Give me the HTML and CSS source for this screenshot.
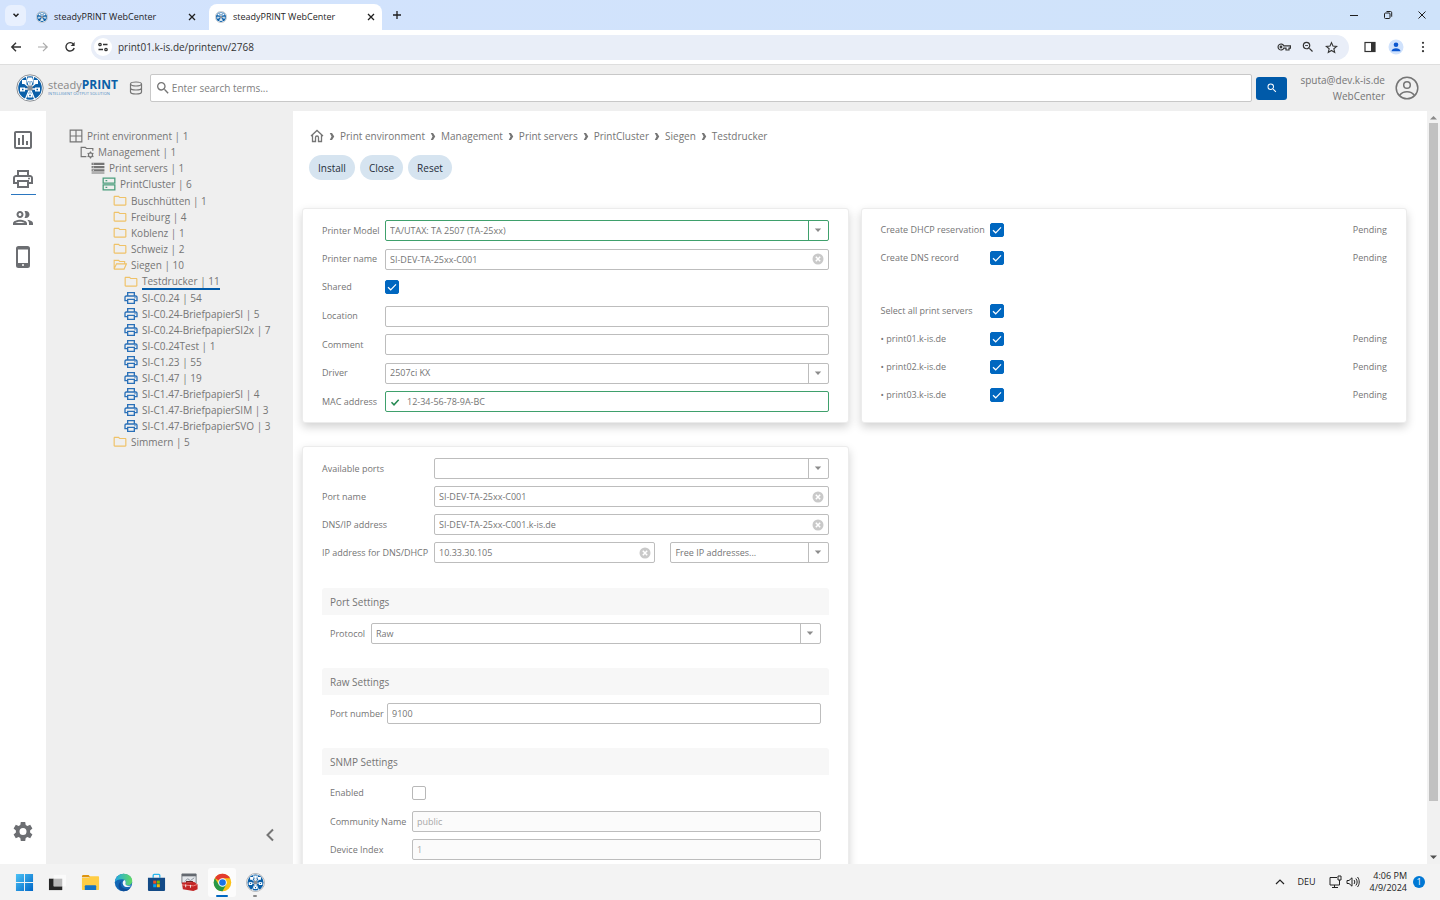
FILE: index.html
```html
<!DOCTYPE html>
<html lang="en">
<head>
  <meta charset="UTF-8">
  <meta name="viewport" content="width=device-width, initial-scale=1.0">
  <title>steadyPRINT WebCenter</title>
  <link rel="stylesheet" href="styles.css">
</head>
<body>
  <!-- Shared icons -->
  <svg class="sprite" aria-hidden="true">
    <symbol id="logo" viewBox="0 0 28 28">
      <circle cx="14" cy="14" r="13.200" fill="#fff" stroke="#8b8f94" stroke-width="1"/>
      <circle cx="14" cy="14" r="11.800" fill="#0a5fa8"/>
      <path d="M14 14L10 2M14 14L18 2M14 14L9 26M14 14L19 26" stroke="#fff" stroke-width="1.200"/>
      <path d="M14 5v17M6 15h16" stroke="#fff" stroke-width="1.300"/>
      <path d="M8 9l6 5 6-5" stroke="#fff" stroke-width="1.200" fill="none"/>
      <path d="M6 6h4.500v4H6zM17.500 6H22v4h-4.500zM4 13.500h5v4H4zM19 13.500h5v4h-5zM11.500 19.500h5v4h-5zM12 3.500h4v3.500h-4z" fill="#fff"/>
      <path d="M6 14.800h1.500v1.500H6zM20.500 14.800H22v1.500h-1.500zM13.200 20.800h1.600v1.500h-1.600z" fill="#0a5fa8"/>
      <path d="M11.500 11.500h5v5h-5z" fill="#8b9097"/>
    </symbol>
    <symbol id="close" viewBox="0 0 10 10"><path d="M2 2l6 6M8 2l-6 6" stroke="currentColor" stroke-width="1.300" fill="none"/></symbol>
    <symbol id="search" viewBox="0 0 24 24"><path fill="currentColor" d="M15.500 14h-.79l-.28-.27A6.470 6.470 0 0 0 16 9.500 6.500 6.500 0 1 0 9.500 16c1.610 0 3.090-.59 4.230-1.570l.27.28v.79l5 4.990L20.490 19l-4.990-5zm-6 0C7.010 14 5 11.990 5 9.500S7.010 5 9.500 5 14 7.010 14 9.500 11.990 14 9.500 14z"/></symbol>
    <symbol id="printer" viewBox="0 0 24 24"><path fill="currentColor" d="M19 8h-1V3H6v5H5c-1.660 0-3 1.340-3 3v6h4v4h12v-4h4v-6c0-1.660-1.340-3-3-3zM8 5h8v3H8V5zm8 12v2H8v-4h8v2zm2-2v-2H6v2H4v-4c0-.55.45-1 1-1h14c.55 0 1 .45 1 1v4h-2z"/><circle cx="18" cy="11.500" r="1" fill="currentColor"/></symbol>
    <symbol id="folder" viewBox="0 0 24 24"><path fill="currentColor" d="M9.170 5l2 2H21v11H3V5h6.170M10 3H3c-1.100 0-2 .9-2 2v13c0 1.100.9 2 2 2h18c1.100 0 2-.9 2-2V7c0-1.100-.9-2-2-2h-9l-2-2z"/></symbol>
    <symbol id="folder-open" viewBox="0 0 24 24"><path d="M2 18.500V4h7.500l2 2H20v4M2 18.500L6 10h17l-4 9H2.500z" fill="none" stroke="currentColor" stroke-width="1.900"/></symbol>
    <symbol id="caret" viewBox="0 0 10 6"><path d="M1 .5h8l-4 4.500z" fill="currentColor"/></symbol>
    <symbol id="clear" viewBox="0 0 12 12"><circle cx="6" cy="6" r="5.500" fill="#c9c9c9"/><path d="M3.800 3.800l4.400 4.400M8.200 3.800L3.800 8.200" stroke="#fff" stroke-width="1.500"/></symbol>
    <symbol id="sep" viewBox="0 0 6 10"><path d="M.5 1h2.500L5.500 5 3 9H.5L2.500 5z" fill="currentColor"/></symbol>
  </svg>

  <!-- Browser -->
  <div class="tab-strip">
    <button class="tab-search" aria-label="Search tabs"><svg width="10" height="10" viewBox="0 0 10 10"><path d="M2.500 3.800L5 6.300l2.500-2.500" stroke="currentColor" stroke-width="1.500" fill="none"/></svg></button>
    <div class="tab">
      <svg class="favicon"><use href="#logo"/></svg>
      <span class="tab-title">steadyPRINT WebCenter</span>
      <button class="plain" aria-label="Close tab"><svg width="10" height="10"><use href="#close"/></svg></button>
    </div>
    <div class="tab active">
      <svg class="favicon"><use href="#logo"/></svg>
      <span class="tab-title">steadyPRINT WebCenter</span>
      <button class="plain" aria-label="Close tab"><svg width="10" height="10"><use href="#close"/></svg></button>
    </div>
    <button class="plain new-tab" aria-label="New tab"><svg width="10" height="10" viewBox="0 0 10 10"><path d="M5 1v8M1 5h8" stroke="currentColor" stroke-width="1.300"/></svg></button>
    <div class="window-buttons">
      <button class="plain" aria-label="Minimize"><svg width="10" height="10" viewBox="0 0 10 10"><path d="M1 5.500h8" stroke="currentColor"/></svg></button>
      <button class="plain" aria-label="Restore"><svg width="10" height="10" viewBox="0 0 10 10"><rect x="1.500" y="3" width="5.500" height="5.500" rx="1" fill="none" stroke="currentColor"/><path d="M3.500 1.500h4a1.200 1.200 0 0 1 1.200 1.200v4" fill="none" stroke="currentColor"/></svg></button>
      <button class="plain" aria-label="Close"><svg width="10" height="10" viewBox="0 0 10 10"><path d="M1.500 1.500l7 7M8.500 1.500l-7 7" stroke="currentColor"/></svg></button>
    </div>
  </div>

  <div class="toolbar">
    <button class="plain" aria-label="Back"><svg width="12" height="12" viewBox="0 0 12 12"><path d="M11 6H2M6 1.800L1.800 6 6 10.200" stroke="currentColor" stroke-width="1.400" fill="none"/></svg></button>
    <button class="plain muted" aria-label="Forward"><svg width="12" height="12" viewBox="0 0 12 12"><path d="M1 6h9M6 1.800L10.200 6 6 10.200" stroke="currentColor" stroke-width="1.200" fill="none"/></svg></button>
    <button class="plain" aria-label="Reload"><svg width="12" height="12" viewBox="0 0 12 12"><path d="M9.500 3.300A4.200 4.200 0 1 0 10.200 7" stroke="currentColor" stroke-width="1.400" fill="none"/><path d="M10.600 1v4H6.600z" fill="currentColor"/></svg></button>
    <div class="omnibox">
      <span class="site-info"><svg width="10" height="10" viewBox="0 0 10 10" fill="none" stroke="currentColor" stroke-width="1.300"><circle cx="2" cy="2.500" r="1.200"/><path d="M5 2.500h4.500M.5 7.500H5"/><circle cx="8" cy="7.500" r="1.200"/></svg></span>
      <input type="text" class="url" aria-label="Address" value="print01.k-is.de/printenv/2768">
      <button class="plain" aria-label="Passwords"><svg width="14" height="12" viewBox="0 0 14 12" fill="none" stroke="currentColor" stroke-width="1.200"><path d="M6.800 4.800A3 3 0 1 0 6.800 7.200H9V9h3V7.200h1.400V4.800z"/><circle cx="4" cy="6" r=".8"/></svg></button>
      <button class="plain" aria-label="Zoom"><svg width="14" height="14" viewBox="0 0 24 24"><use href="#search"/><path d="M7 9.500h5" stroke="currentColor" stroke-width="1.500"/></svg></button>
      <button class="plain" aria-label="Bookmark"><svg width="13" height="13" viewBox="0 0 24 24"><path d="M12 3l2.700 6.300 6.800.6-5.200 4.400 1.600 6.700-5.900-3.600L6.100 21l1.600-6.700L2.500 9.900l6.800-.6z" fill="none" stroke="currentColor" stroke-width="2"/></svg></button>
    </div>
    <div class="toolbar-right">
      <button class="plain" aria-label="Side panel"><svg width="12" height="12" viewBox="0 0 12 12"><rect x="1" y="1.500" width="10" height="9" fill="none" stroke="currentColor" stroke-width="1.200"/><path d="M7 1.500h4v9H7z" fill="currentColor"/></svg></button>
      <button class="plain" aria-label="Profile"><svg width="16" height="16" viewBox="0 0 16 16"><circle cx="8" cy="8" r="7.500" fill="#d0e2fc"/><circle cx="8" cy="5.800" r="2.300" fill="#0b57d0"/><path d="M3.500 12.200c0-2 2.500-3 4.500-3s4.500 1 4.500 3z" fill="#0b57d0"/></svg></button>
      <button class="plain" aria-label="Menu"><svg width="4" height="12" viewBox="0 0 4 12" fill="currentColor"><circle cx="2" cy="1.800" r="1.100"/><circle cx="2" cy="6" r="1.100"/><circle cx="2" cy="10.200" r="1.100"/></svg></button>
    </div>
  </div>

  <!-- App header -->
  <header class="app-header">
    <a href="#" class="brand">
      <svg width="28" height="28"><use href="#logo"/></svg>
      <span class="brand-text">
        <span class="brand-name">steady<b>PRINT</b></span>
        <span class="brand-claim">INTELLIGENT OUTPUT SOLUTION</span>
      </span>
    </a>
    <svg class="db" width="14" height="14" viewBox="0 0 14 14" fill="none" stroke="currentColor" stroke-width="1.200"><ellipse cx="7" cy="3" rx="5.500" ry="2"/><path d="M1.500 3v8c0 1.100 2.500 2 5.500 2s5.500-.9 5.500-2V3M1.500 7c0 1.100 2.500 2 5.500 2s5.500-.9 5.500-2"/></svg>
    <form class="search">
      <label class="search-box">
        <svg width="16" height="16"><use href="#search"/></svg>
        <input type="search" placeholder="Enter search terms..." aria-label="Search">
      </label>
      <button type="button" class="search-button" aria-label="Search"><svg width="12" height="12"><use href="#search"/></svg></button>
    </form>
    <div class="user">
      <span>sputa@dev.k-is.de</span>
      <span>WebCenter</span>
    </div>
    <svg class="avatar" width="24" height="24" viewBox="0 0 24 24" fill="none" stroke="currentColor" stroke-width="1.500"><circle cx="12" cy="12" r="10.800"/><circle cx="12" cy="9" r="3.300"/><path d="M4.500 19.500c1.800-2.500 4.500-3.700 7.500-3.700s5.700 1.200 7.500 3.700"/></svg>
  </header>

  <div class="app">
    <nav class="rail" aria-label="Main">
      <a href="#" aria-label="Dashboard"><svg width="24" height="24" viewBox="0 0 24 24"><path fill="currentColor" d="M19 3H5c-1.100 0-2 .9-2 2v14c0 1.100.9 2 2 2h14c1.100 0 2-.9 2-2V5c0-1.100-.9-2-2-2zm0 16H5V5h14v14zM7 10h2v7H7zm4-3h2v10h-2zm4 6h2v4h-2z"/></svg></a>
      <a href="#" class="active" aria-label="Printers"><svg width="24" height="24"><use href="#printer"/></svg></a>
      <a href="#" aria-label="Users"><svg width="24" height="24" viewBox="0 0 24 24"><path fill="currentColor" d="M9 13.750c-2.340 0-7 1.170-7 3.500V19h14v-1.750c0-2.330-4.660-3.500-7-3.500zM4.340 17c.84-.58 2.870-1.250 4.660-1.250s3.820.67 4.660 1.250H4.340zM9 12c1.930 0 3.500-1.570 3.500-3.500S10.930 5 9 5 5.500 6.570 5.500 8.500 7.070 12 9 12zm0-5c.83 0 1.500.67 1.500 1.500S9.830 10 9 10s-1.500-.67-1.500-1.500S8.170 7 9 7zm7.040 6.810c1.160.84 1.960 1.960 1.960 3.440V19h4v-1.750c0-2.020-3.500-3.170-5.960-3.440zM15 12c1.930 0 3.500-1.570 3.500-3.500S16.930 5 15 5c-.54 0-1.040.13-1.500.35.63.89 1 1.980 1 3.150s-.37 2.260-1 3.150c.46.22.96.35 1.500.35z"/></svg></a>
      <a href="#" aria-label="Mobile"><svg width="24" height="24" viewBox="0 0 24 24"><rect x="6" y="2" width="12" height="20" rx="1.500" fill="none" stroke="currentColor" stroke-width="2"/><path fill="currentColor" d="M6 2h12v2.500H6zM6 18h12v4H6z"/><circle cx="12" cy="20" r="1" fill="#fff"/></svg></a>
      <a href="#" class="settings" aria-label="Settings"><svg width="24" height="24" viewBox="0 0 24 24"><path fill="currentColor" fill-rule="evenodd" d="M9.800 2h4.400l.5 2.900 1.700 1 2.800-1.100 2.200 3.800-2.300 1.800v2.200l2.300 1.800-2.200 3.800-2.800-1.100-1.700 1-.5 2.900H9.800l-.5-2.900-1.700-1-2.800 1.100-2.200-3.800 2.300-1.800v-2.200L2.600 8.600l2.200-3.800 2.800 1.100 1.700-1zM12 8a3.500 3.500 0 1 0 0 7 3.500 3.500 0 0 0 0-7z"/></svg></a>
    </nav>

    <aside class="sidebar">
      <ul class="tree">
        <li><a href="#"><svg viewBox="0 0 24 24" fill="none" stroke="currentColor" stroke-width="2"><path d="M2 2h20v20H2zM12 2v20M2 12h20"/></svg>Print environment | 1</a>
          <ul>
            <li><a href="#"><svg viewBox="0 0 24 24" fill="none" stroke="currentColor" stroke-width="2"><path d="M11 20H2V4h7l2 2h11v4"/><circle cx="18" cy="17" r="3.500"/><path d="M18 11v3M18 20v3M13 14l2.500 1.500M20.500 18.500L23 20M13 20l2.500-1.500M20.500 15.500L23 14"/></svg>Management | 1</a>
              <ul>
                <li><a href="#"><svg viewBox="0 0 24 24"><path d="M1 3h22v4H1zM1 8.500h22v4H1zM1 14h22v4H1zM1 19.500h22v2H1z" fill="currentColor"/><path d="M3 5h2M3 10.500h2M3 16h2" stroke="#efefef" stroke-width="1.500"/></svg>Print servers | 1</a>
                  <ul>
                    <li><a href="#"><svg class="green" viewBox="0 0 24 24" fill="none" stroke="currentColor" stroke-width="2.200"><path d="M2 2h20v8.500H2zM2 13.500h20V22H2zM6 6.200h3M6 17.800h3"/></svg>PrintCluster | 6</a>
                      <ul>
                        <li><a href="#"><svg class="yellow"><use href="#folder"/></svg>Buschhütten | 1</a></li>
                        <li><a href="#"><svg class="yellow"><use href="#folder"/></svg>Freiburg | 4</a></li>
                        <li><a href="#"><svg class="yellow"><use href="#folder"/></svg>Koblenz | 1</a></li>
                        <li><a href="#"><svg class="yellow"><use href="#folder"/></svg>Schweiz | 2</a></li>
                        <li><a href="#"><svg class="yellow"><use href="#folder-open"/></svg>Siegen | 10</a>
                          <ul>
                            <li><a href="#"><svg class="yellow"><use href="#folder"/></svg><span class="selected">Testdrucker | 11</span></a></li>
                            <li><a href="#"><svg class="blue"><use href="#printer"/></svg>SI-C0.24 | 54</a></li>
                            <li><a href="#"><svg class="blue"><use href="#printer"/></svg>SI-C0.24-BriefpapierSI | 5</a></li>
                            <li><a href="#"><svg class="blue"><use href="#printer"/></svg>SI-C0.24-BriefpapierSI2x | 7</a></li>
                            <li><a href="#"><svg class="blue"><use href="#printer"/></svg>SI-C0.24Test | 1</a></li>
                            <li><a href="#"><svg class="blue"><use href="#printer"/></svg>SI-C1.23 | 55</a></li>
                            <li><a href="#"><svg class="blue"><use href="#printer"/></svg>SI-C1.47 | 19</a></li>
                            <li><a href="#"><svg class="blue"><use href="#printer"/></svg>SI-C1.47-BriefpapierSI | 4</a></li>
                            <li><a href="#"><svg class="blue"><use href="#printer"/></svg>SI-C1.47-BriefpapierSIM | 3</a></li>
                            <li><a href="#"><svg class="blue"><use href="#printer"/></svg>SI-C1.47-BriefpapierSVO | 3</a></li>
                          </ul>
                        </li>
                        <li><a href="#"><svg class="yellow"><use href="#folder"/></svg>Simmern | 5</a></li>
                      </ul>
                    </li>
                  </ul>
                </li>
              </ul>
            </li>
          </ul>
        </li>
      </ul>
      <button class="plain collapse" aria-label="Collapse"><svg width="10" height="14" viewBox="0 0 10 14"><path d="M8 1.500L2.500 7 8 12.500" fill="none" stroke="currentColor" stroke-width="2"/></svg></button>
    </aside>

    <main class="content">
      <nav class="breadcrumb" aria-label="Breadcrumb">
        <a href="#" aria-label="Home"><svg width="14" height="14" viewBox="0 0 14 14" fill="none" stroke="currentColor" stroke-width="1.300"><path d="M1 7l6-5.500L13 7M2.500 6v6.500H5.500V8.500a1.500 1.500 0 0 1 3 0v4h3V6"/></svg></a>
        <svg class="sep"><use href="#sep"/></svg>
        <a href="#">Print environment</a>
        <svg class="sep"><use href="#sep"/></svg>
        <a href="#">Management</a>
        <svg class="sep"><use href="#sep"/></svg>
        <a href="#">Print servers</a>
        <svg class="sep"><use href="#sep"/></svg>
        <a href="#">PrintCluster</a>
        <svg class="sep"><use href="#sep"/></svg>
        <a href="#">Siegen</a>
        <svg class="sep"><use href="#sep"/></svg>
        <a href="#">Testdrucker</a>
      </nav>
      <div class="actions">
        <button>Install</button>
        <button>Close</button>
        <button>Reset</button>
      </div>

      <div class="cards">
        <section class="card printer-card">
          <div class="row">
            <label for="model">Printer Model</label>
            <div class="field valid"><select id="model"><option>TA/UTAX: TA 2507 (TA-25xx)</option></select><span class="arrow"><svg><use href="#caret"/></svg></span></div>
          </div>
          <div class="row">
            <label for="name">Printer name</label>
            <div class="field"><input type="text" id="name" value="SI-DEV-TA-25xx-C001"><button class="plain clear" aria-label="Clear"><svg><use href="#clear"/></svg></button></div>
          </div>
          <div class="row">
            <label for="shared">Shared</label>
            <input type="checkbox" id="shared" checked>
          </div>
          <div class="row">
            <label for="location">Location</label>
            <div class="field"><input type="text" id="location"></div>
          </div>
          <div class="row">
            <label for="comment">Comment</label>
            <div class="field"><input type="text" id="comment"></div>
          </div>
          <div class="row">
            <label for="driver">Driver</label>
            <div class="field"><select id="driver"><option>2507ci KX</option></select><span class="arrow"><svg><use href="#caret"/></svg></span></div>
          </div>
          <div class="row">
            <label for="mac">MAC address</label>
            <div class="field valid"><svg class="tick" viewBox="0 0 10 10"><path d="M1.500 5.300L4 7.800l4.700-5" fill="none" stroke="currentColor" stroke-width="1.500"/></svg><input type="text" id="mac" value="12-34-56-78-9A-BC"></div>
          </div>
        </section>

        <section class="card status-card">
          <div class="row"><label for="dhcp">Create DHCP reservation</label><input type="checkbox" id="dhcp" checked><span class="status">Pending</span></div>
          <div class="row"><label for="dns">Create DNS record</label><input type="checkbox" id="dns" checked><span class="status">Pending</span></div>
          <div class="row servers"><label for="all">Select all print servers</label><input type="checkbox" id="all" checked></div>
          <div class="row"><label for="p1">• print01.k-is.de</label><input type="checkbox" id="p1" checked><span class="status">Pending</span></div>
          <div class="row"><label for="p2">• print02.k-is.de</label><input type="checkbox" id="p2" checked><span class="status">Pending</span></div>
          <div class="row"><label for="p3">• print03.k-is.de</label><input type="checkbox" id="p3" checked><span class="status">Pending</span></div>
        </section>

        <section class="card port-card">
          <div class="row">
            <label for="ports">Available ports</label>
            <div class="field"><select id="ports"><option></option></select><span class="arrow"><svg><use href="#caret"/></svg></span></div>
          </div>
          <div class="row">
            <label for="port-name">Port name</label>
            <div class="field"><input type="text" id="port-name" value="SI-DEV-TA-25xx-C001"><button class="plain clear" aria-label="Clear"><svg><use href="#clear"/></svg></button></div>
          </div>
          <div class="row">
            <label for="address">DNS/IP address</label>
            <div class="field"><input type="text" id="address" value="SI-DEV-TA-25xx-C001.k-is.de"><button class="plain clear" aria-label="Clear"><svg><use href="#clear"/></svg></button></div>
          </div>
          <div class="row">
            <label for="ip">IP address for DNS/DHCP</label>
            <div class="split">
              <div class="field"><input type="text" id="ip" value="10.33.30.105"><button class="plain clear" aria-label="Clear"><svg><use href="#clear"/></svg></button></div>
              <div class="field"><select aria-label="Free IP addresses"><option>Free IP addresses...</option></select><span class="arrow"><svg><use href="#caret"/></svg></span></div>
            </div>
          </div>

          <fieldset class="group">
            <legend>Port Settings</legend>
            <div class="row protocol">
              <label for="protocol">Protocol</label>
              <div class="field"><select id="protocol"><option>Raw</option></select><span class="arrow"><svg><use href="#caret"/></svg></span></div>
            </div>
          </fieldset>
          <fieldset class="group">
            <legend>Raw Settings</legend>
            <div class="row port-number">
              <label for="port-number">Port number</label>
              <div class="field"><input type="text" id="port-number" value="9100"></div>
            </div>
          </fieldset>
          <fieldset class="group snmp">
            <legend>SNMP Settings</legend>
            <div class="row">
              <label for="enabled">Enabled</label>
              <input type="checkbox" id="enabled">
            </div>
            <div class="row">
              <label for="community">Community Name</label>
              <div class="field disabled"><input type="text" id="community" value="public" disabled></div>
            </div>
            <div class="row">
              <label for="index">Device Index</label>
              <div class="field disabled"><input type="text" id="index" value="1" disabled></div>
            </div>
          </fieldset>
        </section>
      </div>
    </main>

    <div class="scrollbar" aria-hidden="true">
      <svg width="7" height="5"><path d="M0 4.500L3.500 1 7 4.500z" fill="#8a8a8a"/></svg>
      <div class="thumb"></div>
      <svg width="7" height="5"><path d="M0 .5L3.500 4 7 .5z" fill="#505050"/></svg>
    </div>
  </div>

  <!-- Taskbar -->
  <footer class="taskbar">
    <div class="apps">
      <button class="plain" aria-label="Start"><svg viewBox="0 0 20 20"><defs><linearGradient id="win" x1="0" y1="0" x2="1" y2="1"><stop offset="0" stop-color="#4cc2f5"/><stop offset="1" stop-color="#0067c8"/></linearGradient></defs><path fill="url(#win)" d="M1 1h8.500v8.500H1zM10.500 1H19v8.500h-8.500zM1 10.500h8.500V19H1zM10.500 10.500H19V19h-8.500z"/></svg></button>
      <button class="plain" aria-label="Task view"><svg viewBox="0 0 20 20"><path d="M1 6h14v12H1z" fill="#262626"/><path d="M6 2h13v12H6z" fill="#fafafa"/><path d="M6 6h9v8H6z" fill="#b9b9b9"/></svg></button>
      <button class="plain" aria-label="File Explorer"><svg viewBox="0 0 20 20"><path d="M1 3.500c0-.8.500-1.500 1.500-1.500H8l2 2.500H1z" fill="#dd9410"/><path d="M1 5l7 0 1.500-1.500H18c.6 0 1 .5 1 1V17c0 .6-.4 1-1 1H2c-.6 0-1-.4-1-1z" fill="#ffcd44"/><path d="M4 18v-4c0-.8.5-1.200 1.200-1.200h9.600c.7 0 1.200.4 1.200 1.200v4z" fill="#1573c4"/></svg></button>
      <button class="plain" aria-label="Edge"><svg viewBox="0 0 20 20"><defs><linearGradient id="edge" x1="0" y1="0" x2="1" y2="0"><stop offset="0" stop-color="#24a8e4"/><stop offset="1" stop-color="#62da62"/></linearGradient></defs><circle cx="10" cy="10" r="9.200" fill="#1267b5"/><path d="M1 9.500C1.500 4.500 5.300.8 10.300.8c5 0 8.900 3.400 8.900 7.500 0 3-2.200 4.700-4.700 4.700-1.800 0-2.800-.7-2.500-1.500.9-1.700.3-4.800-3.200-5C5 6.400 2 7.500 1 9.500z" fill="url(#edge)"/><path d="M8 8.500c-2.200 2.300-.8 7.300 3.500 8.200 2.200.4 4.500-.2 6-1.500C15.500 18 13 19.200 10 19.200c-6-.5-7-8-2-10.700z" fill="#0c4c98"/><path d="M12 11.500c.7-1.500.2-3.200-.8-4.200-2 .8-2.700 3.200-1.500 5.200 1.600 2.700 5.500 3 8.700 1-1.500 0-6 .5-6.400-2z" fill="#f1f6fa"/></svg></button>
      <button class="plain" aria-label="Store"><svg viewBox="0 0 20 20"><path d="M6.500 5V2.500c0-.6.300-1 1-1h5c.7 0 1 .4 1 1V5" fill="none" stroke="#2bb8ee" stroke-width="1.400"/><path d="M1 5h18v12.500c0 1-.5 1.500-1.500 1.500h-15C1.500 19 1 18.500 1 17.500z" fill="#134a86"/><path d="M6.500 8h3.200v3.200H6.500z" fill="#f25022"/><path d="M10.300 8h3.200v3.200h-3.200z" fill="#7fba00"/><path d="M6.500 11.800h3.200V15H6.500z" fill="#00a4ef"/><path d="M10.300 11.800h3.200V15h-3.200z" fill="#ffb900"/></svg></button>
      <button class="plain" aria-label="Toolbox"><svg viewBox="0 0 20 20"><path d="M2 1h15v10H2z" fill="#e3e6ea" stroke="#777c83"/><path d="M2 1h15v2.500H2z" fill="#646970"/><path d="M5 9l3-3 3 2 4-3" stroke="#8b949e" fill="none"/><path d="M7 11V9h6l1 2" stroke="#73201f" fill="none" stroke-width="1.200"/><path d="M2 10l13-.5 3.500 2.500v5L14 19 3 17z" fill="#c32525"/><path d="M2 12.500l12 1 4.500-1.500" stroke="#f08b84" fill="none"/><path d="M6 12v3M11 12.500v3" stroke="#eee"/></svg></button>
      <button class="plain current" aria-label="Chrome"><svg viewBox="0 0 20 20"><circle cx="10" cy="10" r="9.200" fill="#fbc116"/><path d="M10 10L2 5.400A9.200 9.200 0 0 1 18 5.500H10z" fill="#e33b2e"/><path d="M2 5.400A9.200 9.200 0 0 0 10 19.200l4-7L10 10 6 12z" fill="#279847"/><circle cx="10" cy="10" r="4.500" fill="#fff"/><circle cx="10" cy="10" r="3.500" fill="#1a73e8"/></svg></button>
      <button class="plain running" aria-label="steadyPRINT"><svg><use href="#logo"/></svg></button>
    </div>
    <div class="tray">
      <button class="plain" aria-label="Hidden icons"><svg width="10" height="10" viewBox="0 0 10 10"><path d="M1 7l4-4 4 4" fill="none" stroke="currentColor" stroke-width="1.200"/></svg></button>
      <span class="lang">DEU</span>
      <svg width="14" height="14" viewBox="0 0 14 14" fill="none" stroke="currentColor"><path d="M9 2.500H2v7.500h9.500V7M4 12.500h6M6.500 10v2.500M10 1h3v4h-3zM11.500 5v2"/></svg>
      <svg width="14" height="14" viewBox="0 0 14 14" fill="none" stroke="currentColor"><path d="M1 5.500h2l3-2.700v8.400L3 8.500H1zM8 5c1 1.200 1 2.800 0 4M9.800 3.500c1.800 2 1.800 5 0 7M11.500 2c2.300 2.800 2.300 7.200 0 10"/></svg>
      <div class="clock"><span>4:06 PM</span><span>4/9/2024</span></div>
      <span class="badge">1</span>
    </div>
  </footer>
</body>
</html>
```
FILE: styles.css
```css
* { margin: 0; padding: 0; box-sizing: border-box; }

body {
  display: flex;
  flex-direction: column;
  height: 100vh;
  overflow: hidden;
  font-family: "Open Sans", "Noto Sans", sans-serif;
  font-size: 10px;
  line-height: 16px;
  color: #757575;
  background: #fff;
}
svg { display: block; flex: none; }
a { color: inherit; text-decoration: none; }
button, input, select { font: inherit; color: inherit; }
.sprite { position: absolute; width: 0; height: 0; }
.plain { display: grid; place-items: center; border: 0; background: none; cursor: pointer; }

/* Browser tabs */
.tab-strip {
  display: flex;
  align-items: center;
  height: 30px;
  padding-left: 5px;
  color: #1f1f1f;
  background: linear-gradient(90deg, #d3e3fd, #cfe3fa);
}
.tab-search {
  display: grid;
  place-items: center;
  width: 21px;
  height: 21px;
  border: 0;
  border-radius: 6px;
  background: #e8f0fe;
}
.tab {
  display: flex;
  align-items: center;
  align-self: flex-end;
  gap: 6px;
  width: 173px;
  height: 26px;
  padding: 0 6px;
  font-size: 9px;
  margin-left: 4px;
}
.tab + .tab { margin-left: 6px; }
.tab.active { border-radius: 8px 8px 0 0; background: #fff; }
.tab-title { flex: 1; white-space: nowrap; }
.favicon { width: 12px; height: 12px; }
.new-tab { margin-left: 10px; }
.window-buttons { display: flex; gap: 24px; margin-left: auto; padding-right: 13px; }

/* Browser toolbar */
.toolbar {
  display: flex;
  align-items: center;
  gap: 15px;
  height: 35px;
  padding: 0 15px 0 10px;
  color: #333;
  background: #fff;
  border-bottom: 1px solid #dedede;
}
.muted { color: #aaa; }
.omnibox {
  display: flex;
  flex: 1;
  align-items: center;
  gap: 10px;
  height: 25px;
  padding: 0 11px 0 3px;
  border-radius: 13px;
  background: #e9eef8;
}
.site-info { display: grid; place-items: center; width: 18px; height: 18px; border-radius: 50%; background: #fff; }
.url { flex: 1; min-width: 0; margin-left: -4px; border: 0; background: none; outline: 0; }
.toolbar-right { display: flex; align-items: center; gap: 12px; }
.toolbar-right button:last-child { margin-left: 5px; }

/* App header */
.app-header {
  display: flex;
  align-items: center;
  height: 46px;
  padding: 0 21px 0 16px;
  background: #efefef;
}
.brand { display: flex; align-items: center; gap: 4px; }
.brand-text { display: flex; flex-direction: column; }
.brand-name { font-size: 11px; line-height: 12px; color: #888; }
.brand-name b { font-size: 12px; color: #0a5fa8; }
.brand-claim { font-size: 4px; line-height: 6px; color: #4f8ec4; }
.db { margin: 0 7px 0 11px; }
.search { display: flex; flex: 1; align-items: center; gap: 4px; }
.search-box {
  display: flex;
  flex: 1;
  align-items: center;
  gap: 1px;
  height: 28px;
  padding: 0 4px;
  border: 1px solid #c8c8c8;
  border-radius: 2px;
  background: #fff;
}
.search-box input { flex: 1; border: 0; outline: 0; background: none; }
.search-box input::placeholder { color: #808080; }
.search-button {
  display: grid;
  place-items: center;
  width: 31px;
  height: 23px;
  border: 0;
  border-radius: 3px;
  color: #fff;
  background: #005aa9;
}
.user { display: flex; flex-direction: column; margin: 0 10px 0 13px; text-align: right; }

/* App frame */
.app { display: flex; flex: 1; min-height: 0; }
.rail {
  display: flex;
  flex-direction: column;
  align-items: center;
  gap: 7px;
  width: 46px;
  padding: 13px 0 16px;
  color: #6c6e72;
}
.rail a { display: grid; place-items: center; width: 25px; height: 32px; border-bottom: 1px solid transparent; }
.rail .active { border-color: #2a76c0; }
.rail .settings { margin-top: auto; }

.sidebar {
  display: flex;
  flex-direction: column;
  justify-content: space-between;
  width: 247px;
  padding: 17px 18px 22px 23px;
  background: #efefef;
}
.tree, .tree ul { list-style: none; }
.tree ul { padding-left: 11px; }
.tree ul ul ul ul { padding-top: 1px; }
.tree a { display: flex; align-items: center; gap: 4px; height: 16px; white-space: nowrap; }
.tree svg { width: 14px; height: 14px; }
.tree .blue { width: 16px; height: 16px; margin: 0 -1px; }
.selected { line-height: 14px; border-bottom: 2px solid #005aa9; }
.yellow { color: #efc268; }
.green { color: #4a9d7c; }
.blue { color: #2a70b8; }
.collapse { align-self: flex-end; }

/* Content */
.content { flex: 1; min-width: 0; overflow: hidden; padding: 17px 20px 0 9px; }
.breadcrumb { display: flex; align-items: center; gap: 5px; padding-left: 8px; }
.sep { width: 6px; height: 9px; }
.actions { display: flex; gap: 5px; margin: 11px 0 28px; padding-left: 7px; }
.actions button {
  height: 25px;
  padding: 0 9px;
  border: 0;
  border-radius: 13px;
  color: #1f2d3a;
  background: #d6e4f0;
}
.cards { display: grid; grid-template-columns: 1fr 1fr; gap: 23px 12px; }
.card {
  display: flex;
  flex-direction: column;
  gap: 8px;
  padding: 11px 19px;
  border: 1px solid #ececec;
  border-radius: 3px;
  background: #fff;
  box-shadow: 0 4px 10px rgba(0, 0, 0, 0.18);
  font-size: 9px;
}
.printer-card { min-height: 215px; justify-content: space-between; gap: 0; }
.port-card { padding-bottom: 48px; }

/* Form rows */
.row { display: grid; grid-template-columns: 63px 1fr; align-items: center; height: 20px; }
.row label { white-space: nowrap; }
.status-card .row { grid-template-columns: 108px 1fr auto; }
.status-card .servers { margin-top: 25px; }
.port-card .row { grid-template-columns: 112px 1fr; }
.split { display: grid; grid-template-columns: 7fr 5fr; gap: 15px; }
.field {
  display: flex;
  align-items: center;
  height: 21px;
  min-width: 0;
  border: 1px solid #bdbdbd;
  border-radius: 2px;
  background: #fff;
}
.field input, .field select {
  flex: 1;
  min-width: 0;
  height: 19px;
  padding: 0 4px;
  border: 0;
  outline: 0;
  background: none;
  appearance: none;
}
.arrow { display: grid; place-items: center; width: 20px; height: 19px; border-left: 1px solid #bdbdbd; color: #8c8c8c; }
.arrow svg { width: 8px; height: 5px; }
.clear { width: 19px; }
.clear svg { width: 12px; height: 12px; }
.valid { border-color: #3fa06c; }
.valid .arrow { border-color: #3fa06c; }
.tick { width: 10px; height: 10px; margin: 0 3px 0 4px; color: #258a52; }
.disabled { background: #fbfbfb; color: #a8a8a8; }
input[type="checkbox"] {
  width: 14px;
  height: 14px;
  border: 1px solid #b8b8b8;
  border-radius: 2px;
  appearance: none;
  background: #fff;
}
.status-card input[type="checkbox"] { margin-left: 1px; }
input[type="checkbox"]:checked {
  border-color: #0067c0;
  background: #0067c0 url("data:image/svg+xml,%3Csvg xmlns='http://www.w3.org/2000/svg' viewBox='0 0 12 12'%3E%3Cpath d='M2 6.200l2.700 2.600L10 3.300' fill='none' stroke='white' stroke-width='1.200'/%3E%3C/svg%3E") center / 12px no-repeat;
}

/* Grouped settings */
.group { border: 0; margin-top: 18px; padding: 0 8px; }
.group + .group { margin-top: 17px; }
.group legend {
  width: calc(100% + 16px);
  height: 27px;
  margin: 0 -8px 8px;
  padding: 0 8px;
  border-radius: 3px 3px 0 0;
  font-size: 10px;
  line-height: 28px;
  background: #f7f7f7;
}
.group .row + .row { margin-top: 8px; }
.group .protocol { grid-template-columns: 41px 1fr; }
.group .port-number { grid-template-columns: 57px 1fr; }
.snmp .row { grid-template-columns: 82px 1fr; }

/* Scrollbar */
.scrollbar {
  display: flex;
  flex-direction: column;
  align-items: center;
  width: 13px;
  padding: 4px 0;
  background: #f1f1f1;
}
.thumb { width: 9px; flex: 0 1 91%; margin: 3px 0 auto; background: #c1c1c1; }

/* Taskbar */
.taskbar {
  display: flex;
  align-items: center;
  justify-content: space-between;
  height: 36px;
  padding: 0 15px 0 10px;
  color: #222;
  background: #f3f3f3;
}
.apps { display: flex; gap: 5px; }
.apps button { position: relative; width: 28px; height: 29px; border-radius: 3px; }
.apps svg { width: 19px; height: 19px; }
.apps .current { background: #fcfcfc; }
.apps .current::after, .apps .running::after {
  content: "";
  position: absolute;
  bottom: 0;
  left: 8px;
  right: 8px;
  height: 2px;
  border-radius: 1px;
  background: #0067c0;
}
.apps .running::after { left: 12px; right: 12px; background: #888; }
.tray { display: flex; align-items: center; font-size: 9px; }
.tray > svg { margin-right: 4px; }
.lang { margin: 0 12px; }
.clock { display: flex; flex-direction: column; margin: 0 6px; line-height: 12px; text-align: right; }
.badge { width: 12px; height: 12px; border-radius: 50%; line-height: 12px; text-align: center; color: #fff; background: #0078d4; }
```
